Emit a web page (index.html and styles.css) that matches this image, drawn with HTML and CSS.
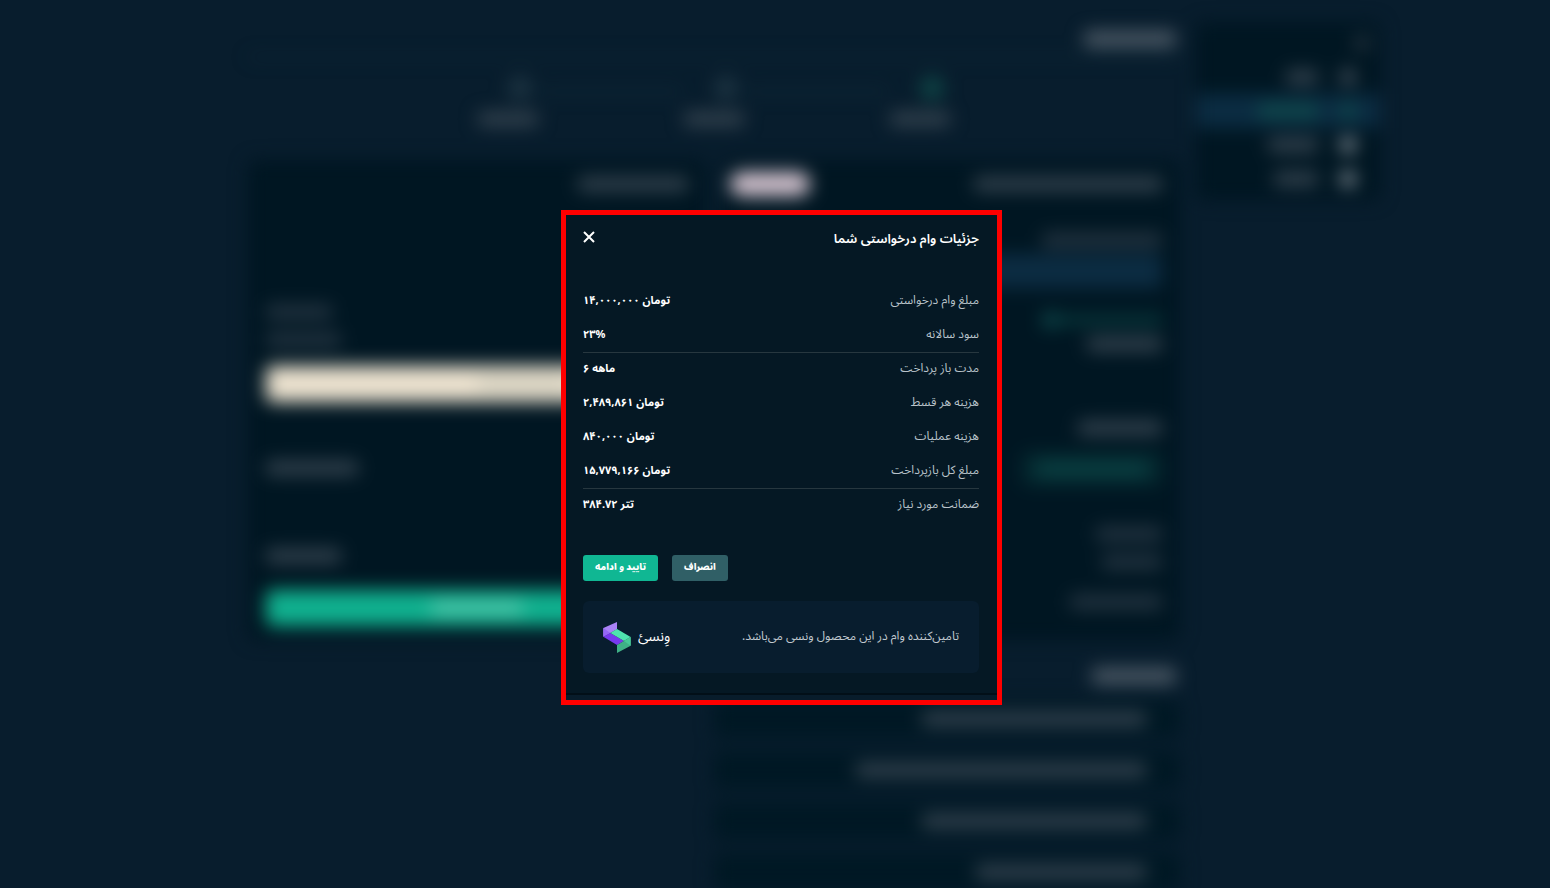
FILE: index.html
```
<!DOCTYPE html>
<html lang="fa" dir="rtl">
<head>
    <meta charset="UTF-8">
    <meta name="viewport" content="width=device-width, initial-scale=1.0">
    <title>جزئیات وام درخواستی شما</title>
    <link rel="stylesheet" href="styles.css">
</head>
<body>
    <!-- Page behind the dialog -->
    <div class="page" aria-hidden="true">
        <div class="sidebar">
            <div class="side-item side-top"><span class="dot dim"></span></div>
            <div class="side-item"><span class="dot"></span><span class="bar w-30"></span></div>
            <div class="side-item active"><span class="dot green"></span><span class="bar green w-60"></span></div>
            <div class="side-item"><span class="dot bright"></span><span class="bar w-50"></span></div>
            <div class="side-item"><span class="dot bright"></span><span class="bar w-45"></span></div>
        </div>

        <div class="main">
            <div class="page-title"><span class="bar strong w-90"></span></div>

            <div class="steps">
                <div class="step current"><span class="step-dot"></span><span class="bar w-60"></span></div>
                <div class="step-line"></div>
                <div class="step"><span class="step-dot"></span><span class="bar w-60"></span></div>
                <div class="step-line"></div>
                <div class="step"><span class="step-dot"></span><span class="bar w-60"></span></div>
            </div>

            <div class="columns">
                <div class="card">
                    <div class="card-head">
                        <span class="bar w-190"></span>
                        <span class="pill"></span>
                    </div>
                    <div class="line first"><span class="bar faint w-120"></span></div>
                    <div class="field"></div>
                    <div class="slider"><span class="slider-fill"></span><span class="dot green"></span></div>
                    <div class="line"><span class="bar w-75"></span></div>
                    <div class="line section"><span class="bar w-80"></span></div>
                    <div class="chip"><span class="bar green w-110"></span></div>
                    <div class="line"><span class="bar faint w-65"></span></div>
                    <div class="line"><span class="bar faint w-60"></span></div>
                    <div class="line after"><span class="bar faint w-90"></span></div>
                </div>

                <div class="card summary">
                    <div class="card-head"><span class="bar w-110"></span></div>
                    <div class="line"><span class="bar faint w-65"></span></div>
                    <div class="line"><span class="bar faint w-75"></span></div>
                    <div class="block beige"><span class="bar shade w-90"></span></div>
                    <div class="line middle"><span class="bar w-90"></span></div>
                    <div class="line total"><span class="bar w-75"></span></div>
                    <div class="block teal"><span class="bar light w-90"></span></div>
                </div>
            </div>

            <div class="faq">
                <div class="faq-title"><span class="bar strong w-80"></span></div>
                <div class="faq-item"><span class="bar w-220"></span></div>
                <div class="faq-item"><span class="bar w-290"></span></div>
                <div class="faq-item"><span class="bar w-220"></span></div>
                <div class="faq-item"><span class="bar w-170"></span></div>
            </div>
        </div>
    </div>

    <!-- Loan details dialog -->
    <div class="overlay">
        <div class="frame">
            <div class="dialog" role="dialog" aria-modal="true" aria-labelledby="dialogTitle">
                <div class="dialog-head">
                    <h1 id="dialogTitle">جزئیات وام درخواستی شما</h1>
                    <button class="close" type="button" aria-label="بستن">
                        <svg width="12" height="12" viewBox="0 0 12 12">
                            <path d="M1 1L11 11M11 1L1 11" stroke="#fff" stroke-width="2" fill="none"/>
                        </svg>
                    </button>
                </div>

                <table class="details">
                    <tr><th scope="row">مبلغ وام درخواستی</th><td>تومان ۱۴,۰۰۰,۰۰۰</td></tr>
                    <tr class="divider"><th scope="row">سود سالانه</th><td>۲۳%</td></tr>
                    <tr><th scope="row">مدت باز پرداخت</th><td>ماهه ۶</td></tr>
                    <tr><th scope="row">هزینه هر قسط</th><td>تومان ۲,۴۸۹,۸۶۱</td></tr>
                    <tr><th scope="row">هزینه عملیات</th><td>تومان ۸۴۰,۰۰۰</td></tr>
                    <tr class="divider"><th scope="row">مبلغ کل بازپرداخت</th><td>تومان ۱۵,۷۷۹,۱۶۶</td></tr>
                    <tr><th scope="row">ضمانت مورد نیاز</th><td>تتر ۳۸۴.۷۲</td></tr>
                </table>

                <div class="actions">
                    <button class="btn btn-cancel" type="button">انصراف</button>
                    <button class="btn btn-confirm" type="button">تایید و ادامه</button>
                </div>

                <div class="provider">
                    <p>تامین‌کننده وام در این محصول ونسی می‌باشد.</p>
                    <div class="brand">
                        <span class="brand-name">وِنسیٔ</span>
                        <svg width="28" height="31" viewBox="0 0 82 93">
                            <polygon points="0,18 41,0 41,22 21,33 0,44" fill="#a982f6"/>
                            <polygon points="0,18 21,33 0,44" fill="#9566f5"/>
                            <polygon points="0,44 21,33 62,57 41,69" fill="#7739ee"/>
                            <polygon points="21,33 41,21 82,45 62,57" fill="#4fe3ae"/>
                            <polygon points="41,69 82,45 82,71 41,93" fill="#3fb086"/>
                            <polygon points="62,57 82,45 82,71" fill="#47c897"/>
                        </svg>
                    </div>
                </div>
            </div>
        </div>
    </div>
</body>
</html>
```
FILE: styles.css
```
* {
    margin: 0;
    padding: 0;
    box-sizing: border-box;
}

body {
    font-family: 'Noto Sans Arabic', 'DejaVu Sans', sans-serif;
    background: #081d2d;
    color: #fff;
    height: 100vh;
    overflow: hidden;
}

/* Blurred page */
.page {
    display: flex;
    align-items: flex-start;
    gap: 16px;
    padding: 22px 11% 0 16%;
    filter: blur(9px);
}

.sidebar {
    width: 184px;
    background: #001622;
    border-radius: 8px;
    padding: 4px 0;
}

.side-item {
    display: flex;
    align-items: center;
    gap: 22px;
    height: 34px;
    padding: 0 24px;
}

.side-top {
    padding: 0 10px;
}

.side-item.active {
    background: #0b2c42;
}

.main {
    flex: 1;
}

.bar {
    display: block;
    height: 14px;
    border-radius: 4px;
    background: #34434f;
}

.bar.faint { background: #243441; }
.bar.strong { background: #4d5a66; height: 16px; }
.bar.green { background: #0f4a4c; }
.bar.shade { background: #d3cfbe; }
.bar.light { background: #4fc4a8; }

.w-30 { width: 32px; }
.w-45 { width: 44px; }
.w-50 { width: 50px; }
.w-60 { width: 60px; }
.w-65 { width: 66px; }
.w-75 { width: 75px; }
.w-80 { width: 84px; }
.w-90 { width: 92px; }
.w-110 { width: 110px; }
.w-120 { width: 120px; }
.w-170 { width: 170px; }
.w-190 { width: 188px; }
.w-220 { width: 224px; }
.w-290 { width: 290px; }

.dot {
    width: 16px;
    height: 16px;
    border-radius: 50%;
    background: #46525e;
}

.dot.dim { background: #25333f; }
.dot.green { background: #0f4c4e; }
.dot.bright { background: #88929b; }

.page-title {
    display: flex;
    align-items: center;
    height: 36px;
    padding: 0 4px;
    border-bottom: 2px solid #0e2f3d;
}

.steps {
    display: flex;
    align-items: flex-start;
    justify-content: center;
    padding-top: 18px;
    height: 102px;
}

.step {
    display: flex;
    flex-direction: column;
    align-items: center;
    gap: 12px;
    width: 64px;
}

.step-dot {
    align-self: flex-start;
    width: 24px;
    height: 24px;
    margin-right: 8px;
    border-radius: 50%;
    background: #1d3442;
}

.step.current .step-dot { background: #0f4546; }

.step-line {
    width: 142px;
    height: 3px;
    margin-top: 14px;
    background: #0e303e;
}

.columns {
    display: grid;
    grid-template-columns: 1fr 1fr;
    gap: 16px;
}

.card {
    height: 480px;
    padding: 12px 18px;
    background: #001622;
    border-radius: 8px;
}

.card-head {
    display: flex;
    align-items: center;
    justify-content: space-between;
    height: 24px;
}

.pill {
    width: 80px;
    height: 24px;
    margin-left: -10px;
    border-radius: 12px;
    background: #d2c2ce;
}

.line {
    display: flex;
    align-items: center;
    height: 28px;
}

.line.first { margin-top: 30px; }
.line.section { margin-top: 56px; }
.line.after { margin-top: 12px; }

.field {
    height: 34px;
    background: #0c2c42;
    border-radius: 6px;
}

.slider {
    display: flex;
    align-items: center;
    height: 36px;
    margin-top: 14px;
    margin-bottom: -8px;
}

.slider-fill {
    width: 104px;
    height: 8px;
    background: #0a4243;
}

.chip {
    display: flex;
    align-items: center;
    justify-content: center;
    width: 140px;
    height: 34px;
    margin: 10px 0 34px;
    background: #04282f;
    border-radius: 6px;
}

.chip .green { background: #0a4143; }

.summary .line {
    justify-content: flex-end;
}

.summary .card-head + .line {
    margin-top: 102px;
}

.summary .line.middle { margin-top: 52px; }
.summary .line.total { margin-top: 60px; }

.block {
    display: flex;
    align-items: center;
    justify-content: center;
    height: 36px;
    margin-top: 12px;
    border-radius: 6px;
}

.block.beige { background: #ece2cf; }
.block.teal { background: #10b18f; margin-top: 20px; }

.beige .shade { margin-right: -92px; }

.faq {
    width: 50%;
    padding-top: 24px;
}

.faq-title {
    height: 36px;
    padding: 4px;
}

.faq-item {
    display: flex;
    align-items: center;
    height: 38px;
    margin-bottom: 13px;
    padding: 0 34px;
    background: #001824;
    border-radius: 6px;
}

/* Dialog */
.overlay {
    position: fixed;
    inset: 0;
    display: flex;
    align-items: center;
    justify-content: center;
    padding-top: 27px;
    padding-left: 13px;
}

.frame {
    width: 441px;
    max-width: 100%;
    border: 5px solid #ff0000;
    background: #081c2b;
    padding-bottom: 5px;
}

.dialog {
    padding: 14px 18px 20px 17px;
    background: #051824;
    border-bottom: 2px solid #020f18;
}

.dialog-head {
    display: flex;
    align-items: flex-start;
    justify-content: space-between;
    height: 20px;
}

h1 {
    font-size: 13px;
    font-weight: 600;
    line-height: 20px;
}

.close {
    width: 12px;
    height: 12px;
    margin-top: 2px;
    border: none;
    background: none;
    cursor: pointer;
}

.close svg {
    display: block;
}

.details {
    width: 100%;
    margin-top: 35px;
    border-collapse: collapse;
}

.details th,
.details td {
    height: 34px;
    line-height: 16px;
    vertical-align: middle;
}

.details th {
    text-align: right;
    font-size: 12px;
    font-weight: normal;
    color: #b9c3ca;
}

.details td {
    text-align: left;
    font-size: 11px;
    font-weight: bold;
}

.details .divider {
    border-bottom: 1px solid #27373f;
}

.actions {
    display: flex;
    justify-content: flex-end;
    gap: 14px;
    margin-top: 33px;
}

.btn {
    height: 26px;
    padding: 0 12px;
    border: none;
    border-radius: 3px;
    color: #fff;
    font-family: inherit;
    font-size: 9px;
    font-weight: 900;
    line-height: 16px;
    cursor: pointer;
}

.btn-cancel { background: #305f66; }
.btn-confirm { background: #10b793; }

.provider {
    display: flex;
    align-items: center;
    justify-content: space-between;
    height: 72px;
    margin-top: 20px;
    padding: 0 20px;
    background: #081d2e;
    border-radius: 6px;
}

.provider p {
    font-size: 12px;
    line-height: 16px;
    color: #c1cad0;
}

.brand {
    display: flex;
    align-items: center;
    gap: 7px;
}

.brand-name {
    font-size: 14px;
    line-height: 20px;
}
```
